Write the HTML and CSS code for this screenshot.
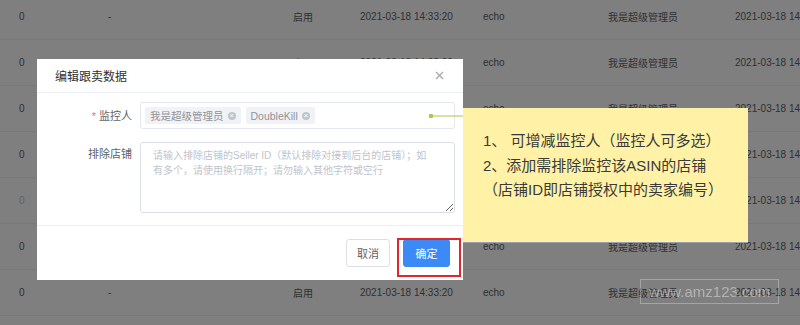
FILE: index.html
```html
<!DOCTYPE html>
<html lang="zh-CN">
<head>
  <meta charset="UTF-8">
  <meta name="viewport" content="width=device-width, initial-scale=1.0">
  <title>编辑跟卖数据</title>
  <link rel="stylesheet" href="styles.css">
</head>
<body>
  <!-- table behind the dialog -->
  <div class="table">
    <div class="row">
      <span>0</span><span>-</span><span>启用</span><span>2021-03-18 14:33:20</span><span>echo</span><span>我是超级管理员</span><span>2021-03-18 14:33:20</span>
    </div>
    <div class="row">
      <span>0</span><span>-</span><span>启用</span><span>2021-03-18 14:33:20</span><span>echo</span><span>我是超级管理员</span><span>2021-03-18 14:33:20</span>
    </div>
    <div class="row">
      <span>0</span><span>-</span><span>启用</span><span>2021-03-18 14:33:20</span><span>echo</span><span>我是超级管理员</span><span>2021-03-18 14:33:20</span>
    </div>
    <div class="row">
      <span>0</span><span>-</span><span>启用</span><span>2021-03-18 14:33:20</span><span>echo</span><span>我是超级管理员</span><span>2021-03-18 14:33:20</span>
    </div>
    <div class="row">
      <span class="faded">0</span><span>-</span><span>启用</span><span>2021-03-18 14:33:20</span><span>echo</span><span>我是超级管理员</span><span>2021-03-18 14:33:20</span>
    </div>
    <div class="row">
      <span>0</span><span>-</span><span>启用</span><span>2021-03-18 14:33:20</span><span>echo</span><span>我是超级管理员</span><span>2021-03-18 14:33:20</span>
    </div>
    <div class="row">
      <span>0</span><span>-</span><span>启用</span><span>2021-03-18 14:33:20</span><span>echo</span><span>我是超级管理员</span><span>2021-03-18 14:33:20</span>
    </div>
  </div>

  <div class="mask"></div>

  <div class="watermark">www.amz123.com</div>

  <div class="modal">
    <div class="modal-header">
      <span class="modal-title">编辑跟卖数据</span>
      <svg class="modal-close" width="9" height="9" viewBox="0 0 9 9">
        <path d="M1 1L8 8M8 1L1 8" stroke="#a8abb2" stroke-width="1.4" fill="none"/>
      </svg>
    </div>
    <div class="modal-body">
      <div class="form-row">
        <label class="form-label"><i class="req">*</i> 监控人</label>
        <div class="select-box">
          <span class="tag">我是超级管理员<i class="tag-close">×</i></span>
          <span class="tag">DoubleKill<i class="tag-close">×</i></span>
        </div>
      </div>
      <div class="form-row top">
        <label class="form-label">排除店铺</label>
        <textarea class="textarea" placeholder="请输入排除店铺的Seller ID（默认排除对接到后台的店铺）；如有多个，请使用换行隔开；请勿输入其他字符或空行"></textarea>
      </div>
    </div>
    <div class="modal-footer">
      <button class="btn">取消</button>
      <button class="btn btn-primary">确定</button>
    </div>
  </div>

  <!-- annotation layer -->
  <div class="red-frame"></div>
  <svg class="connector" width="48" height="10" viewBox="0 0 48 10">
    <line x1="5" y1="5" x2="42" y2="5" stroke="#b3c24d" stroke-width="1"/>
    <circle cx="5" cy="5" r="2.3" fill="#b3c24d"/>
    <circle cx="42" cy="5" r="2.3" fill="#b3c24d"/>
  </svg>
  <div class="note">
    <p>1、 可增减监控人（监控人可多选）</p>
    <p>2、添加需排除监控该ASIN的店铺</p>
    <p>（店铺ID即店铺授权中的卖家编号）</p>
  </div>
</body>
</html>
```

FILE: styles.css
```css
body {
  margin: 0;
  height: 325px;
  overflow: hidden;
  background: #fff;
  font-family: "Liberation Sans", "Noto Sans CJK SC", sans-serif;
  color: #606266;
}

/* background table */
.table {
  margin-top: -6px;
  font-size: 10px;
}

.table .row {
  display: grid;
  grid-template-columns: 108px 185px 67px 123px 125px 127px 1fr;
  height: 46px;
  align-items: center;
  border-bottom: 1px solid #f2f3f6;
  box-sizing: border-box;
  white-space: nowrap;
}

.table .row span:first-child {
  padding-left: 19px;
}

.table .faded {
  color: #c0c4cc;
}

.mask {
  position: fixed;
  inset: 0;
  background: rgba(0, 0, 0, 0.5);
}

.watermark {
  position: absolute;
  left: 640px;
  top: 279px;
  width: 139px;
  height: 25px;
  box-sizing: border-box;
  border: 1px solid rgba(255, 255, 255, 0.3);
  color: rgba(255, 255, 255, 0.4);
  font-size: 15px;
  line-height: 23px;
  text-align: center;
}

/* dialog */
.modal {
  position: absolute;
  left: 37px;
  top: 59px;
  width: 426px;
  height: 221px;
  background: #fff;
  display: flex;
  flex-direction: column;
}

.modal-header {
  height: 33px;
  padding: 0 19px 0 18px;
  border-bottom: 1px solid #ebeef5;
  display: flex;
  align-items: center;
  justify-content: space-between;
}

.modal-title {
  font-size: 12px;
  color: #303133;
  font-family: "Noto Sans CJK SC", sans-serif;
}

.modal-body {
  padding: 9px 8px 0 0;
  height: 133px;
  box-sizing: border-box;
  border-bottom: 1px solid #ebeef5;
}

.form-row {
  display: flex;
  align-items: center;
  gap: 8px;
  margin-bottom: 13px;
}

.form-row.top {
  align-items: flex-start;
}

.form-label {
  width: 95px;
  text-align: right;
  font-size: 11px;
  line-height: 24px;
  color: #606266;
}

.req {
  font-style: normal;
  color: #f56c6c;
}

.select-box {
  flex: 1;
  height: 27px;
  box-sizing: border-box;
  border: 1px solid #e4e7ed;
  border-radius: 3px;
  display: flex;
  align-items: center;
  gap: 5px;
  padding-left: 4px;
}

.tag {
  height: 17px;
  padding: 0 5px;
  background: #f0f2f5;
  border-radius: 2px;
  color: #909399;
  font-size: 10.5px;
  display: flex;
  align-items: center;
  gap: 4px;
}

.tag-close {
  width: 8px;
  height: 8px;
  border-radius: 50%;
  background: #c0c4cc;
  color: #fff;
  font-style: normal;
  font-size: 8px;
  line-height: 8px;
  text-align: center;
}

.textarea {
  flex: 1;
  height: 71px;
  box-sizing: border-box;
  margin: 0;
  border: 1px solid #dcdfe6;
  border-radius: 3px;
  padding: 5px 22px 5px 12px;
  font-family: "Liberation Sans", "Noto Sans CJK SC", sans-serif;
  font-size: 10px;
  line-height: 15px;
  resize: vertical;
}

.textarea::placeholder {
  color: #c0c4cc;
}

.modal-footer {
  flex: 1;
  display: flex;
  justify-content: flex-end;
  align-items: center;
  gap: 13px;
  padding: 0 13px;
}

.btn {
  width: 44px;
  height: 28px;
  padding: 0;
  border: 1px solid #dcdfe6;
  border-radius: 3px;
  background: #fff;
  color: #606266;
  font-family: "Noto Sans CJK SC", sans-serif;
  font-size: 11px;
}

.btn-primary {
  width: 47px;
  border-color: #3b8af6;
  background: #3b8af6;
  color: #fff;
}

/* annotations */
.red-frame {
  position: absolute;
  left: 397px;
  top: 238px;
  width: 64px;
  height: 39px;
  box-sizing: border-box;
  border: 2px solid #e3262b;
}

.connector {
  position: absolute;
  left: 426px;
  top: 111px;
}

.note {
  position: absolute;
  left: 463px;
  top: 108px;
  width: 285px;
  height: 135px;
  box-sizing: border-box;
  padding: 21px 0 0 20px;
  background: #fff2a6;
  border-bottom: 1px solid #9aa0b0;
  font-family: "Liberation Sans", "Noto Sans CJK SC", sans-serif;
  font-size: 15px;
  line-height: 24.5px;
  color: #3a3a3a;
}

.note p {
  margin: 0;
}
```
